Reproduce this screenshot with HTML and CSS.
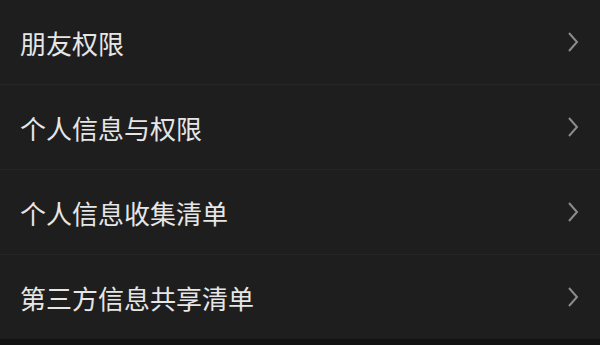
FILE: index.html
```html
<!DOCTYPE html>
<html lang="zh-CN">

<head>
    <meta charset="UTF-8" />
    <meta name="viewport" content="width=device-width, initial-scale=1.0" />
    <title>设置</title>
    <link rel="stylesheet" href="styles.css">
</head>

<body>
    <div class="list">
        <div class="item">
            <span class="label">朋友权限</span>
            <svg class="arrow" width="12" height="22" viewBox="0 0 12 22"><path d="M2 2 L10 11 L2 20" /></svg>
        </div>
        <div class="item">
            <span class="label">个人信息与权限</span>
            <svg class="arrow" width="12" height="22" viewBox="0 0 12 22"><path d="M2 2 L10 11 L2 20" /></svg>
        </div>
        <div class="item">
            <span class="label">个人信息收集清单</span>
            <svg class="arrow" width="12" height="22" viewBox="0 0 12 22"><path d="M2 2 L10 11 L2 20" /></svg>
        </div>
        <div class="item">
            <span class="label">第三方信息共享清单</span>
            <svg class="arrow" width="12" height="22" viewBox="0 0 12 22"><path d="M2 2 L10 11 L2 20" /></svg>
        </div>
    </div>
    <div class="bottom"></div>
</body>

</html>
```

FILE: styles.css
```css
html,
body {
    margin: 0;
    height: 100%;
    background-color: #1e1e1e;
}

body {
    display: flex;
    flex-direction: column;
    font-family: "Noto Sans CJK SC", "Noto Sans", sans-serif;
}

.list {
    flex: 1;
}

.item {
    height: 84px;
    display: flex;
    align-items: center;
    justify-content: space-between;
    padding: 0 21px 0 20px;
    border-bottom: 1px solid #262626;
}

.item:first-child {
    height: 84px;
}

.item:last-child {
    border-bottom: none;
}

.label {
    color: #e6e6e6;
    font-size: 26px;
}

.arrow path {
    fill: none;
    stroke: #8c8c8c;
    stroke-width: 2;
}

.bottom {
    height: 6px;
    background-color: #121212;
}
```
